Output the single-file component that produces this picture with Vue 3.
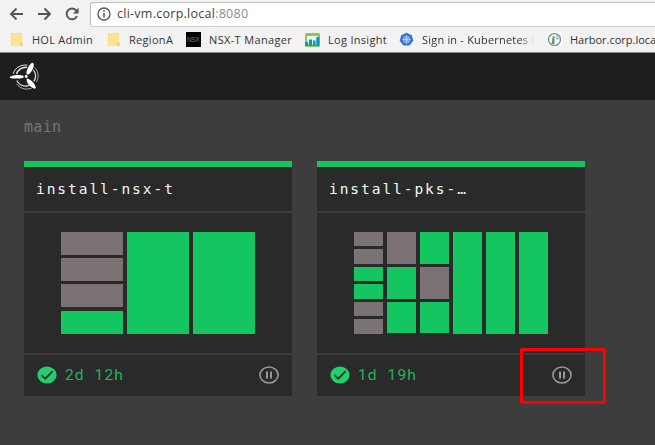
<script setup>
const bookmarks = [
  { id: 'hol', icon: 'folder', label: 'HOL Admin' },
  { id: 'region', icon: 'folder', label: 'RegionA' },
  { id: 'nsx', icon: 'nsx', label: 'NSX-T Manager' },
  { id: 'log', icon: 'log', label: 'Log Insight' },
  { id: 'kube', icon: 'kube', label: 'Sign in - Kubernetes D' },
  { id: 'harbor', icon: 'harbor', label: 'Harbor.corp.loca' },
]

const pipelines = [
  { name: 'install-nsx-t', age: '2d 12h', size: 'wide', columns: ['pppg', 'g', 'g'] },
  { name: 'install-pks-…', age: '1d 19h', size: 'dense', columns: ['ppggpp', 'pgg', 'gpg', 'g', 'g', 'g'] },
]
</script>

<template>
  <div class="window">
    <div class="browser">
      <div class="toolbar">
        <svg class="nav" width="90" height="28" viewBox="0 0 90 28" fill="none" stroke="#555" stroke-width="1.9">
          <path d="M23 14H11M16.500 8.500 11 14l5.500 5.500" />
          <path d="M38 14h12M44.500 8.500 50 14l-5.500 5.500" />
          <path d="M76.300 10.600A5.400 5.400 0 1 0 77 16" />
          <path d="M78.600 7.800v5.600H73z" fill="#555" stroke="none" />
        </svg>
        <div class="address">
          <svg width="14" height="14" viewBox="0 0 14 14" fill="none" stroke="#5a5a5a">
            <circle cx="7" cy="7" r="6" stroke-width="1.4" />
            <path d="M7 6v4.500M7 3.300v1.500" stroke-width="1.600" />
          </svg>
          <span class="url">cli-vm.corp.local<span class="port">:8080</span></span>
        </div>
      </div>
      <div class="bookmarks">
        <div v-for="b in bookmarks" :key="b.id" class="bookmark" :class="b.id">
          <svg v-if="b.icon === 'folder'" class="glyph" width="15" height="15" viewBox="0 0 15 15">
            <path d="M1 1.500h10.500V10h1v4H1z" fill="#ffe591" />
            <path d="M1.400 13.600V1.500h10V10" fill="none" stroke="#f5d675" stroke-width=".7" />
            <path d="M10 10.500h2.500V14H10z" fill="#f3cf62" />
          </svg>
          <svg v-else-if="b.icon === 'nsx'" class="glyph" width="15" height="15" viewBox="0 0 15 15">
            <rect width="15" height="15" fill="#000" />
            <text x="1" y="10" font-size="6.500" textLength="13" fill="#568578" font-family="Liberation Sans, sans-serif">NSX</text>
          </svg>
          <svg v-else-if="b.icon === 'log'" class="glyph" width="15" height="15" viewBox="0 0 15 15">
            <rect width="15" height="14" y="1" rx="1.500" fill="#8cc751" />
            <path d="M2 4h11v8H2z" fill="#f0f5eb" />
            <path d="M0 10h3v4H0zM4 7.500h3V14H4zM8 8.500h2.500V14H8zM11.300 5h3v9h-3z" fill="#0797d0" />
          </svg>
          <svg v-else-if="b.icon === 'kube'" class="glyph" width="15" height="15" viewBox="0 0 15 15">
            <path d="m7.500.8 5.300 2.500 1.500 5.500-3.700 4.700H4.400L.7 8.800l1.500-5.500z" fill="#3970e4" />
            <g stroke="#dce8ff" fill="none" stroke-width=".7">
              <circle cx="7.500" cy="7.500" r="3" />
              <path d="M7.500 3.200v8.600M3.300 7.500h8.400M4.600 4.600l5.800 5.800M10.400 4.600l-5.800 5.800" />
            </g>
          </svg>
          <svg v-else class="glyph" width="15" height="15" viewBox="0 0 15 15">
            <rect width="15" height="15" fill="#fafafa" />
            <circle cx="7.500" cy="7.500" r="6" fill="none" stroke="#788188" stroke-width="1.200" />
            <path d="m5.500 5 2-1.500V12h-3z" fill="#60a63c" />
            <path d="M9 4h4M9 6.500h4" stroke="#8fb4cd" stroke-width="1.500" />
          </svg>
          <span class="label">{{ b.label }}</span>
        </div>
      </div>
    </div>

    <header class="topbar">
      <svg width="32" height="30" viewBox="0 0 32 30">
        <g fill="#fff">
          <path d="M1 15.800c3-1.600 9-2.300 13.500-1v1.900C10 17.900 4 17.800 1 16.900z" />
          <path d="M17.500 13.300c-.6-3.500 2.300-9.300 5.500-11.500l1.700.6c.5 4-1.800 8.500-5.200 11z" />
          <path d="M18 17.500c3.800.5 8.500 5.500 8.800 9.500l-1.300.8c-4.300-1.500-7.400-5-8-9z" />
          <circle cx="17.200" cy="15.500" r="1.400" />
        </g>
        <g fill="none" stroke="#e4e4e4" stroke-width="1">
          <path d="M4.300 12.800C5.500 7.500 10.500 3.600 18.500 4" />
          <path d="M7.500 13C8.500 9 12.500 6 18 6.300" stroke-width="1.500" />
          <path d="M25.500 6.500C29 10 30.500 15 27.500 21" opacity=".7" />
          <path d="M24.300 9C27 12.500 27 17 24.800 20.500" stroke-width="1.200" />
          <path d="M22.500 27.300C16 29.300 10.500 27 7.500 22.800" opacity=".7" />
          <path d="M20 24.700C14.500 26 10 23.500 7.800 19.500" stroke-width="1.200" />
        </g>
      </svg>
    </header>

    <main class="dashboard">
      <div class="team">main</div>
      <div class="cards">
        <section v-for="(p, i) in pipelines" :key="p.name" class="card">
          <div class="band"></div>
          <h2 class="name">{{ p.name }}</h2>
          <div class="preview">
            <div class="grid" :class="p.size">
              <div v-for="(col, c) in p.columns" :key="c" class="col">
                <div v-for="(job, j) in col.split('')" :key="j" class="job" :class="{ passed: job === 'g' }"></div>
              </div>
            </div>
          </div>
          <footer class="foot">
            <svg width="20" height="18" viewBox="0 0 20 18">
              <ellipse cx="10" cy="9" rx="9.600" ry="8.600" fill="#20d06d" />
              <path d="m4.500 9.200 3.700 3.500 7.500-7.500" fill="none" stroke="#262d29" stroke-width="1.700" />
            </svg>
            <span class="age">{{ p.age }}</span>
            <svg class="pause" width="20" height="18" viewBox="0 0 20 18">
              <ellipse cx="10" cy="9" rx="9.100" ry="8" fill="none" stroke="#979797" stroke-width="1.600" />
              <path d="M8 5.500v7M12 5.500v7" stroke="#979797" stroke-width="2" />
            </svg>
            <div v-if="i === 1" class="highlight"></div>
          </footer>
        </section>
      </div>
    </main>
  </div>
</template>

<style>
body { background: #3d3d3d; overflow: hidden; }
</style>

<style scoped>
* { box-sizing: border-box; }
svg { display: block; flex: none; }
.window { width: 655px; height: 445px; overflow: hidden; background: #3d3d3d; }
.browser { height: 53px; background: #f2f2f2; border-bottom: 1px solid #898989; font-family: "Open Sans", "Noto Sans", sans-serif; overflow: hidden; }
.toolbar { height: 28px; display: flex; }
.address { flex: 1; height: 25px; margin-top: 2px; border: 1px solid #bdbdbd; border-right: 0; border-bottom-color: #d0d0d0; border-radius: 3px 0 0 3px; background: #fff; display: flex; align-items: center; padding: 0 0 1px 6px; gap: 6px; }
.url { font-size: 12.500px; letter-spacing: .26px; line-height: 20px; color: #424242; white-space: nowrap; }
.port { color: #8c8c8c; }
.bookmarks { display: flex; height: 24px; padding-left: 10px; }
.bookmark { flex: none; display: flex; align-items: center; height: 23px; font-size: 11px; color: #333; white-space: nowrap; }
.glyph { margin-right: 8px; }
.hol { width: 97px; letter-spacing: .25px; }
.region { width: 79px; letter-spacing: .3px; }
.hol .glyph, .region .glyph { margin-right: 7px; }
.nsx { width: 119px; letter-spacing: .35px; }
.log { width: 94px; letter-spacing: .3px; }
.kube { width: 148px; letter-spacing: .2px; }
.kube .label { width: 112px; overflow: hidden; mask-image: linear-gradient(to right, #000 88%, transparent); }
.harbor { width: 108px; letter-spacing: 0; }
.topbar { height: 47px; background: #1e1e1e; padding: 8px 0 0 9px; }
.dashboard { padding: 17px 24px 0; }
.team { height: 44px; font: 15px/20px "DejaVu Sans Mono", monospace; letter-spacing: .3px; color: #747474; }
.cards { display: flex; gap: 25px; }
.card { width: 268px; height: 234.500px; background: #2a2a2a; display: flex; flex-direction: column; }
.band { height: 6px; background: #13c65f; }
.name { margin: 0; height: 46px; border-bottom: 2px solid #3d3d3d; padding-left: 12px; font: 14.500px/44px "DejaVu Sans Mono", monospace; letter-spacing: 1.950px; color: #f6f6f6; white-space: nowrap; }
.preview { height: 140px; padding: 19px 37px; }
.grid { width: 194px; height: 101.500px; display: flex; gap: 3.300px; }
.dense { gap: 3.500px; }
.col { flex: 1; display: flex; flex-direction: column; gap: 3.200px; }
.job { flex: 1; background: #7b7373; }
.passed { background: #13c65f; }
.foot { position: relative; flex: 1; border-top: 2px solid #3a3a3a; display: flex; align-items: center; padding: 0 13px; }
.age { margin-left: 8px; font: 15.500px/20px Roboto, sans-serif; letter-spacing: 1.150px; word-spacing: 4.800px; color: #22b559; }
.pause { margin-left: auto; }
.highlight { position: absolute; left: 203px; top: -7px; width: 86px; height: 56px; border: 3px solid #f00; border-radius: 2px; }
</style>
